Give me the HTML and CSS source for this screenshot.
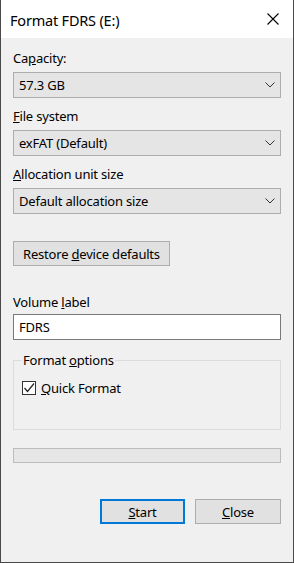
FILE: index.html
```html
<!DOCTYPE html>
<html lang="en">
<head>
    <meta charset="UTF-8">
    <title>Format FDRS (E:)</title>
    <link rel="stylesheet" href="styles.css">
</head>
<body>
    <div class="window">
        <header class="titlebar">
            <span class="title">Format FDRS (E:)</span>
            <svg class="close-x" width="12" height="12" viewBox="0 0 12 12">
                <path d="M0.5 0.5 L11.5 11.5 M11.5 0.5 L0.5 11.5" stroke="#000" stroke-width="1.1" fill="none"/>
            </svg>
        </header>
        <main class="body">
            <div class="field">
                <label>Ca<u>p</u>acity:</label>
                <div class="combo">
                    <span>57.3 GB</span>
                    <svg width="10" height="6" viewBox="0 0 10 6"><path d="M0.5 0.5 L5 5 L9.5 0.5" stroke="#333" fill="none"/></svg>
                </div>
            </div>
            <div class="field">
                <label><u>F</u>ile system</label>
                <div class="combo">
                    <span>exFAT (Default)</span>
                    <svg width="10" height="6" viewBox="0 0 10 6"><path d="M0.5 0.5 L5 5 L9.5 0.5" stroke="#333" fill="none"/></svg>
                </div>
            </div>
            <div class="field">
                <label><u>A</u>llocation unit size</label>
                <div class="combo">
                    <span>Default allocation size</span>
                    <svg width="10" height="6" viewBox="0 0 10 6"><path d="M0.5 0.5 L5 5 L9.5 0.5" stroke="#333" fill="none"/></svg>
                </div>
            </div>

            <button class="btn restore">Restore <u>d</u>evice defaults</button>

            <div class="field volume">
                <label>Volume <u>l</u>abel</label>
                <div class="textbox">FDRS</div>
            </div>

            <fieldset class="group">
                <legend>Format <u>o</u>ptions</legend>
                <div class="check-row">
                    <span class="checkbox">
                        <svg width="12" height="12" viewBox="0 0 12 12"><path d="M1.5 6 L4.5 9.5 L11 1.5" stroke="#222" stroke-width="1.2" fill="none"/></svg>
                    </span>
                    <span><u>Q</u>uick Format</span>
                </div>
            </fieldset>

            <div class="progress"></div>

            <div class="actions">
                <button class="btn default"><u>S</u>tart</button>
                <button class="btn"><u>C</u>lose</button>
            </div>
        </main>
    </div>
</body>
</html>
```

FILE: styles.css
```css
/* Finestra di dialogo */
body {
    margin: 0;
    padding: 0;
    font-family: "Noto Sans", "Open Sans", sans-serif;
    font-size: 13px;
    letter-spacing: -0.2px;
    color: #000;
    background: #3a3a3a;
}

.window {
    width: 294px;
    height: 563px;
    box-sizing: border-box;
    border: 1px solid #4a4a4a;
    border-top: none;
    background: #f0f0f0;
    display: flex;
    flex-direction: column;
}

.titlebar {
    height: 38px;
    background: #fff;
    display: flex;
    align-items: center;
    justify-content: space-between;
    padding: 0 14px 0 9px;
    flex-shrink: 0;
}

.title {
    font-size: 14.5px;
    line-height: 20px;
    margin-top: 1px;
}

.close-x {
    display: block;
}

.body {
    padding: 12px 12px 0 12px;
    display: flex;
    flex-direction: column;
}

.field {
    display: flex;
    flex-direction: column;
    gap: 6px;
}

.field + .field {
    margin-top: 10px;
}

.field label {
    line-height: 16px;
}

.combo {
    height: 26px;
    box-sizing: border-box;
    border: 1px solid #adadad;
    background: #e5e5e5;
    display: flex;
    align-items: center;
    justify-content: space-between;
    padding: 0 5px 0 5px;
}

.combo svg {
    display: block;
}

.btn {
    font-family: inherit;
    font-size: 13px;
    letter-spacing: inherit;
    color: #000;
    background: #e1e1e1;
    border: 1px solid #adadad;
    height: 25px;
    padding: 0;
    box-sizing: border-box;
}

.restore {
    margin-top: 27px;
    width: 157px;
    align-self: flex-start;
}

.field.volume {
    margin-top: 28px;
    gap: 4px;
}

.textbox {
    height: 26px;
    box-sizing: border-box;
    border: 1px solid #7a7a7a;
    background: #fff;
    padding: 0 5px;
    display: flex;
    align-items: center;
}

.group {
    margin: 12px 0 0 0;
    padding: 12px 8px 0 8px;
    border: 1px solid #dcdcdc;
    height: 78px;
    box-sizing: border-box;
}

.group legend {
    padding: 0 1px;
    line-height: 16px;
}

.check-row {
    display: flex;
    align-items: center;
    gap: 5px;
    line-height: 16px;
}

.checkbox {
    width: 14px;
    height: 14px;
    box-sizing: border-box;
    border: 1px solid #333;
    background: #fff;
    display: flex;
    align-items: center;
    justify-content: center;
}

.progress {
    margin-top: 18px;
    height: 15px;
    border: 1px solid #bcbcbc;
    background: #e6e6e6;
    box-sizing: border-box;
}

.actions {
    margin-top: 36px;
    display: flex;
    justify-content: flex-end;
    gap: 10px;
}

.actions .btn {
    width: 86px;
}

.btn.default {
    width: 85px;
    border: 2px solid #0078d7;
}
```
